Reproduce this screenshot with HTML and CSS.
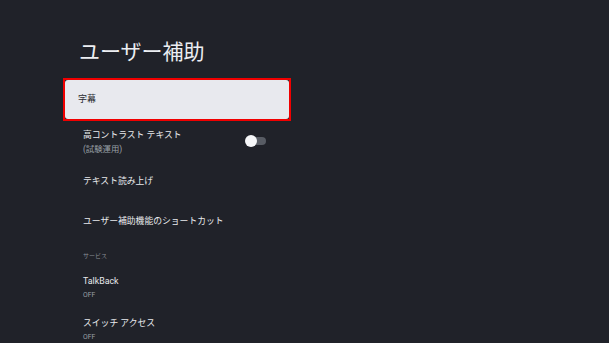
FILE: index.html
```html
<!DOCTYPE html>
<html lang="ja">
<head>
<meta charset="utf-8">
<link rel="stylesheet" href="styles.css">
</head>
<body>
<main class="panel">
  <h1 class="title">ユーザー補助</h1>
  <div class="focus">
    <div class="card">字幕</div>
  </div>
  <div class="row row-toggle">
    <div class="texts">
      <div class="label">高コントラスト テキスト</div>
      <div class="sub">(試験運用)</div>
    </div>
    <div class="toggle"><span class="track"></span><span class="knob"></span></div>
  </div>
  <div class="row row-single"><div class="label">テキスト読み上げ</div></div>
  <div class="row row-single"><div class="label">ユーザー補助機能のショートカット</div></div>
  <div class="section">サービス</div>
  <div class="row row-service">
    <div class="label">TalkBack</div>
    <div class="status">OFF</div>
  </div>
  <div class="row row-service">
    <div class="label">スイッチ アクセス</div>
    <div class="status">OFF</div>
  </div>
</main>
</body>
</html>
```
FILE: styles.css
```css
html, body {
  margin: 0;
  padding: 0;
  background: #202229;
  height: 100%;
  overflow: hidden;
}
body {
  font-family: Roboto, "Noto Sans CJK JP", "Noto Sans", sans-serif;
  color: #e8eaed;
}
.panel {
  width: 228px;
  margin-left: 63px;
  padding-top: 38px;
}
.title {
  margin: 0 0 11px 16px;
  font-size: 21px;
  line-height: 29px;
  font-weight: 400;
  color: #eceef2;
}
.focus {
  border: 2px solid #f00000;
  height: 39px;
}
.card {
  height: 39px;
  background: #e8e9ee;
  border-radius: 3px;
  box-sizing: border-box;
  padding-left: 13px;
  font-size: 9px;
  line-height: 39px;
  color: #2a2c31;
}
.row {
  padding-left: 20px;
  padding-right: 25px;
  box-sizing: border-box;
}
.label {
  font-size: 8.8px;
  line-height: 14px;
  color: #e8eaed;
}
.row-toggle {
  height: 40px;
  display: flex;
  align-items: center;
  justify-content: space-between;
}
.sub {
  font-size: 8.4px;
  line-height: 10px;
  margin-top: 2px;
  color: #9aa0a6;
}
.toggle {
  position: relative;
  width: 21px;
  height: 12px;
}
.track {
  position: absolute;
  left: 6px;
  top: 2px;
  width: 15px;
  height: 8px;
  border-radius: 4px;
  background: #585c64;
}
.knob {
  position: absolute;
  left: 0;
  top: 0;
  width: 12px;
  height: 12px;
  border-radius: 50%;
  background: #f6f7f9;
}
.row-single {
  height: 40px;
  display: flex;
  align-items: center;
}
.section {
  padding-left: 20px;
  margin-top: 10px;
  font-size: 6px;
  line-height: 10px;
  color: #8a8f96;
}
.row-service {
  padding-top: 13px;
}
.row-service + .row-service {
  padding-top: 16px;
}
.status {
  font-size: 6.8px;
  line-height: 10px;
  margin-top: 2px;
  color: #9aa0a6;
}
```
